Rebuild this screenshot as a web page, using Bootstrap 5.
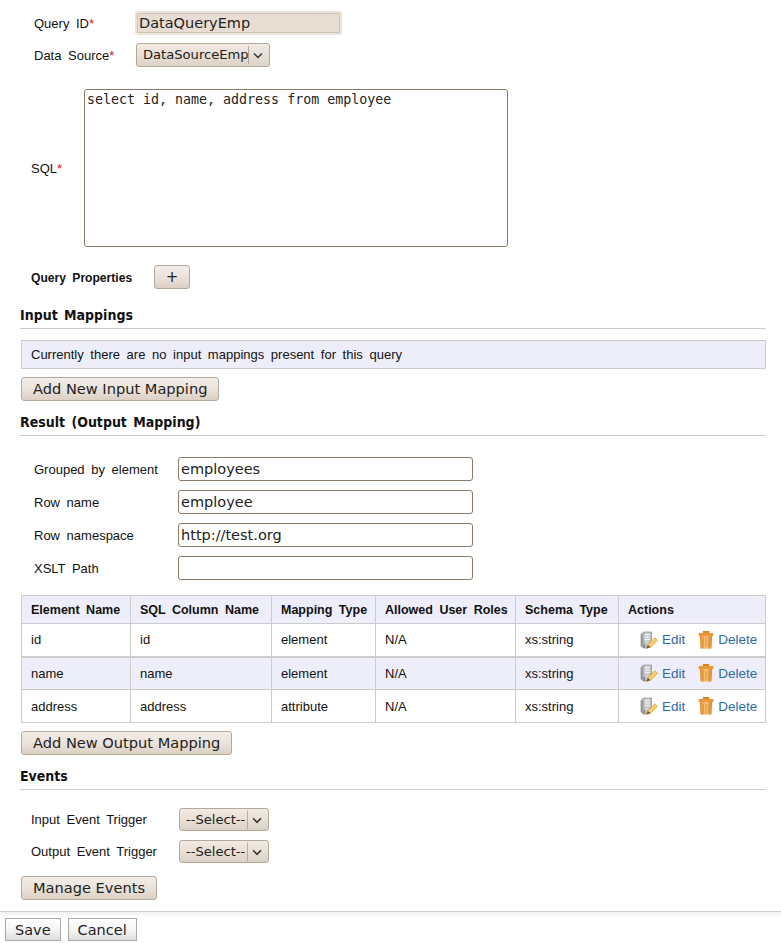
<!DOCTYPE html>
<html lang="en">
<head>
<meta charset="utf-8">
<title>Data Query</title>
<link href="https://cdn.jsdelivr.net/npm/bootstrap@5.3.0/dist/css/bootstrap.min.css" rel="stylesheet">
<style>
html,body{height:100%}
body{font-family:"Liberation Sans",Arial,sans-serif;font-size:13px;line-height:15px;color:#111;word-spacing:3px;background:#fff;overflow:hidden}
.qpage{height:911px;padding:11px 15px 0 20px;overflow:hidden}
.fld-row{display:flex;align-items:center}
.qlabel{font-size:13px;line-height:15px}
.lab-id{width:115px;padding-left:14px}
.lab-src{width:116px;padding-left:14px}
.req{color:#e01010}
.form-control.tan-input{font-family:"DejaVu Sans",sans-serif;font-size:14.5px;word-spacing:0;height:24px;min-height:0;padding:0 2px;border:1px solid #8a7a68;border-radius:3px;color:#222;box-shadow:none}
.form-control.tan-input:focus{box-shadow:none;border-color:#8a7a68}
.form-control.id-input,.form-control.id-input:focus{width:207px;background:#e8ddd3;border:2px solid #ece3da;box-shadow:inset 0 0 0 1px #cfc3b6;padding:0 2px}
.form-select.tan-select{font-family:"DejaVu Sans",sans-serif;font-size:13.1px;word-spacing:0;color:#222;height:24px;padding:0 14px 0 6px;border:1px solid #b5a99b;border-radius:3px;box-shadow:none;
 background-color:#e8ddd3;background-image:url("data:image/svg+xml,%3Csvg xmlns='http://www.w3.org/2000/svg' width='22' height='22'%3E%3Cpath d='M1.500 2v18' stroke='%23b5a99b'/%3E%3Cpath d='M7 9.500l4 4 4-4' fill='none' stroke='%23333' stroke-width='1.500'/%3E%3C/svg%3E"),linear-gradient(#f2ebe4,#ddd2c6);background-repeat:no-repeat,repeat;background-position:right 0 center,0 0;background-size:22px 22px,auto}
.form-select.tan-select:focus{border-color:#b5a99b;box-shadow:none}
.form-select.sel-source{width:134px}
.form-select.sel-event{width:90px;height:23px}
.sql-row{margin-top:22px}
.sql-label{width:64px;padding-left:11px}
.form-control.sql-box{width:424px;height:158px;font-family:"DejaVu Sans Mono",monospace;font-size:13.3px;line-height:16px;word-spacing:0;padding:2px;border:1px solid #8a7a68;border-radius:3px;color:#222;resize:none}
.form-control.sql-box:focus{box-shadow:none;border-color:#8a7a68}
.qp-row{margin-top:18px;padding-left:11px}
.qp-label{font-size:12.1px;font-weight:700;width:123px;padding-top:3px}
.btn.tan-btn{font-family:"DejaVu Sans",sans-serif;font-size:14.6px;line-height:18px;word-spacing:0;color:#222;height:24px;padding:0 11px;border:1px solid #b5a99b;border-radius:3px;background:linear-gradient(#f3ede7 0,#ebe3db 50%,#dcd0c4 100%)}
.btn.tan-btn:hover,.btn.tan-btn:active{color:#222;border-color:#b5a99b;background:linear-gradient(#f3ede7 0,#ebe3db 50%,#dcd0c4 100%)}
.sect-head{font-family:"DejaVu Sans Condensed","DejaVu Sans",sans-serif;font-size:14px;font-weight:700;line-height:17px;margin:13px 0 0;padding-bottom:4px;border-bottom:1px solid #ccc;color:#111;word-spacing:2px}
.sect-first{margin-top:18px}
.btn.btn-plus{width:36px;padding:0;font-size:15px}
.note-box{margin-top:11px;margin-left:1px;height:29px;padding:0 9px;display:flex;align-items:center;background:#eeeefa;border:1px solid #ccc}
.gap-btn{display:block;margin-top:8px;margin-left:1px}
.out-form{margin-top:21px;padding-left:14px}
.out-form .fld-row{margin-bottom:9px}
.out-form .qlabel{width:144px}
.form-control.out-input{width:295px}
.table.map-table{width:744px;margin:15px 0 0 1px;table-layout:fixed;border-color:#ccc;color:#111;font-size:13px;line-height:15px}
.table.map-table>*>*>*{padding:0 0 0 9px;vertical-align:middle;border-color:#ccc;color:#111;background:transparent;box-shadow:none}
.table.map-table>thead>tr>th{height:28px;padding-top:1px;background:#eeeefa;font-size:12.5px;font-weight:700}
.map-table tbody tr{height:33px}
.table.map-table>tbody>tr:first-child>td{border-bottom-width:2px}
.table.map-table>tbody>tr.alt-row>td{background:#eeeefa}
.c1{width:109px}.c2{width:141px}.c3{width:104px}.c4{width:140px}.c5{width:103px}.c6{width:147px}
.act-link{color:#2f6aa8;text-decoration:none;word-spacing:0;font-size:13.5px}
.act-wrap{display:flex;align-items:center;padding-left:12px}
.act-wrap svg{flex:none;margin-right:4px}
.act-wrap .act-link+svg{margin-left:13px;margin-right:4px}
.ev-form{margin-top:18px;padding-left:11px}
.ev-form .qlabel{width:148px}
.ev-form .fld-row+.fld-row{margin-top:9px}
.gap-manage{margin-top:13px}
.footbar{height:32px;border-top:1px solid #d0d0d0;padding:6px 0 0 5px;display:flex;gap:7px;align-items:flex-start;background:linear-gradient(#f1f1f1 0,#fff 6px)}
.btn.foot-btn{font-family:"DejaVu Sans",sans-serif;font-size:14.5px;line-height:18px;word-spacing:0;color:#222;height:23px;padding:0 9px;border:1px solid #aaa;border-radius:0;background:linear-gradient(#fff 0,#f4f4f4 55%,#ddd 100%)}
.btn.foot-btn:hover,.btn.foot-btn:active{color:#222;border-color:#aaa;background:linear-gradient(#fff 0,#f4f4f4 55%,#ddd 100%)}
</style>
</head>
<body>
<svg width="0" height="0" class="position-absolute">
<defs>
<linearGradient id="binG" x1="0" x2="1" y1="0" y2="0"><stop offset="0" stop-color="#e58a22"/><stop offset=".5" stop-color="#f9d08a"/><stop offset="1" stop-color="#dd8420"/></linearGradient>
<linearGradient id="srvG" x1="0" x2="1" y1="0" y2="0"><stop offset="0" stop-color="#8d9194"/><stop offset=".5" stop-color="#d3d5d7"/><stop offset="1" stop-color="#b7babc"/></linearGradient>
<symbol id="ic-edit" viewBox="0 0 18 18">
<path d="M1 3.500 3.500 1h8v10.500L7.500 17h-4L1 15z" fill="url(#srvG)" stroke="#8a8e91" stroke-width=".7"/>
<path d="M4.500 3.500h5.500M4.500 6h5.500M4.500 8.500h5.500" stroke="#f2f2f2" stroke-width="1.200"/>
<path d="M3.500 14h1.800M3.500 16h1.800" stroke="#5e5e5e" stroke-width="1"/>
<path d="M6.500 17.300l1.300-3.600L14.800 6.700l2.700 2.600-7 7z" fill="#f6cf6a" stroke="#d19a2c" stroke-width=".7"/>
<path d="M6.500 17.300l1.300-3.600 2.700 2.600z" fill="#6d5a3c"/>
</symbol>
<symbol id="ic-bin" viewBox="0 0 16 18">
<path d="M5.500 2V.7h5V2" fill="#e58a22" stroke="#d67f1e" stroke-width="1.200"/>
<rect x=".5" y="2" width="15" height="3" rx=".8" fill="#e8973a"/>
<path d="M1.800 5h12.400l-.7 12a.9.9 0 0 1-.9.8H3.400a.9.9 0 0 1-.9-.8z" fill="url(#binG)"/>
<path d="M5 6.500v10M8 6.500v10M11 6.500v10" stroke="#d08428" stroke-width=".9"/>
</symbol>
</defs>
</svg>

<div class="qpage">
  <form>
    <div class="fld-row">
      <label class="qlabel lab-id">Query ID<span class="req">*</span></label>
      <input class="form-control tan-input id-input" value="DataQueryEmp">
    </div>
    <div class="fld-row mt-2">
      <label class="qlabel lab-src">Data Source<span class="req">*</span></label>
      <select class="form-select tan-select sel-source"><option>DataSourceEmp</option></select>
    </div>
    <div class="fld-row sql-row">
      <label class="qlabel sql-label">SQL<span class="req">*</span></label>
      <textarea class="form-control sql-box">select id, name, address from employee</textarea>
    </div>
    <div class="fld-row qp-row">
      <span class="qp-label">Query Properties</span>
      <button type="button" class="btn tan-btn btn-plus">+</button>
    </div>

    <h2 class="sect-head sect-first">Input Mappings</h2>
    <div class="note-box">Currently there are no input mappings present for this query</div>
    <button type="button" class="btn tan-btn gap-btn">Add New Input Mapping</button>

    <h2 class="sect-head">Result (Output Mapping)</h2>
    <div class="out-form">
      <div class="fld-row"><label class="qlabel">Grouped by element</label><input class="form-control tan-input out-input" value="employees"></div>
      <div class="fld-row"><label class="qlabel">Row name</label><input class="form-control tan-input out-input" value="employee"></div>
      <div class="fld-row"><label class="qlabel">Row namespace</label><input class="form-control tan-input out-input" value="http://test.org"></div>
      <div class="fld-row"><label class="qlabel">XSLT Path</label><input class="form-control tan-input out-input" value=""></div>
    </div>

    <table class="table table-bordered map-table">
      <colgroup><col class="c1"><col class="c2"><col class="c3"><col class="c4"><col class="c5"><col class="c6"></colgroup>
      <thead><tr><th>Element Name</th><th>SQL Column Name</th><th>Mapping Type</th><th>Allowed User Roles</th><th>Schema Type</th><th>Actions</th></tr></thead>
      <tbody>
        <tr><td>id</td><td>id</td><td>element</td><td>N/A</td><td>xs:string</td><td><div class="act-wrap"><svg width="18" height="18"><use href="#ic-edit"/></svg><a href="#" class="act-link">Edit</a><svg width="16" height="18"><use href="#ic-bin"/></svg><a href="#" class="act-link">Delete</a></div></td></tr>
        <tr class="alt-row"><td>name</td><td>name</td><td>element</td><td>N/A</td><td>xs:string</td><td><div class="act-wrap"><svg width="18" height="18"><use href="#ic-edit"/></svg><a href="#" class="act-link">Edit</a><svg width="16" height="18"><use href="#ic-bin"/></svg><a href="#" class="act-link">Delete</a></div></td></tr>
        <tr><td>address</td><td>address</td><td>attribute</td><td>N/A</td><td>xs:string</td><td><div class="act-wrap"><svg width="18" height="18"><use href="#ic-edit"/></svg><a href="#" class="act-link">Edit</a><svg width="16" height="18"><use href="#ic-bin"/></svg><a href="#" class="act-link">Delete</a></div></td></tr>
      </tbody>
    </table>
    <button type="button" class="btn tan-btn gap-btn">Add New Output Mapping</button>

    <h2 class="sect-head">Events</h2>
    <div class="ev-form">
      <div class="fld-row"><label class="qlabel">Input Event Trigger</label><select class="form-select tan-select sel-event"><option>--Select--</option></select></div>
      <div class="fld-row"><label class="qlabel">Output Event Trigger</label><select class="form-select tan-select sel-event"><option>--Select--</option></select></div>
    </div>
    <button type="button" class="btn tan-btn gap-btn gap-manage">Manage Events</button>
  </form>
</div>
<div class="footbar">
  <button type="button" class="btn foot-btn">Save</button>
  <button type="button" class="btn foot-btn">Cancel</button>
</div>
<script src="https://cdn.jsdelivr.net/npm/bootstrap@5.3.0/dist/js/bootstrap.bundle.min.js"></script>
</body>
</html>
